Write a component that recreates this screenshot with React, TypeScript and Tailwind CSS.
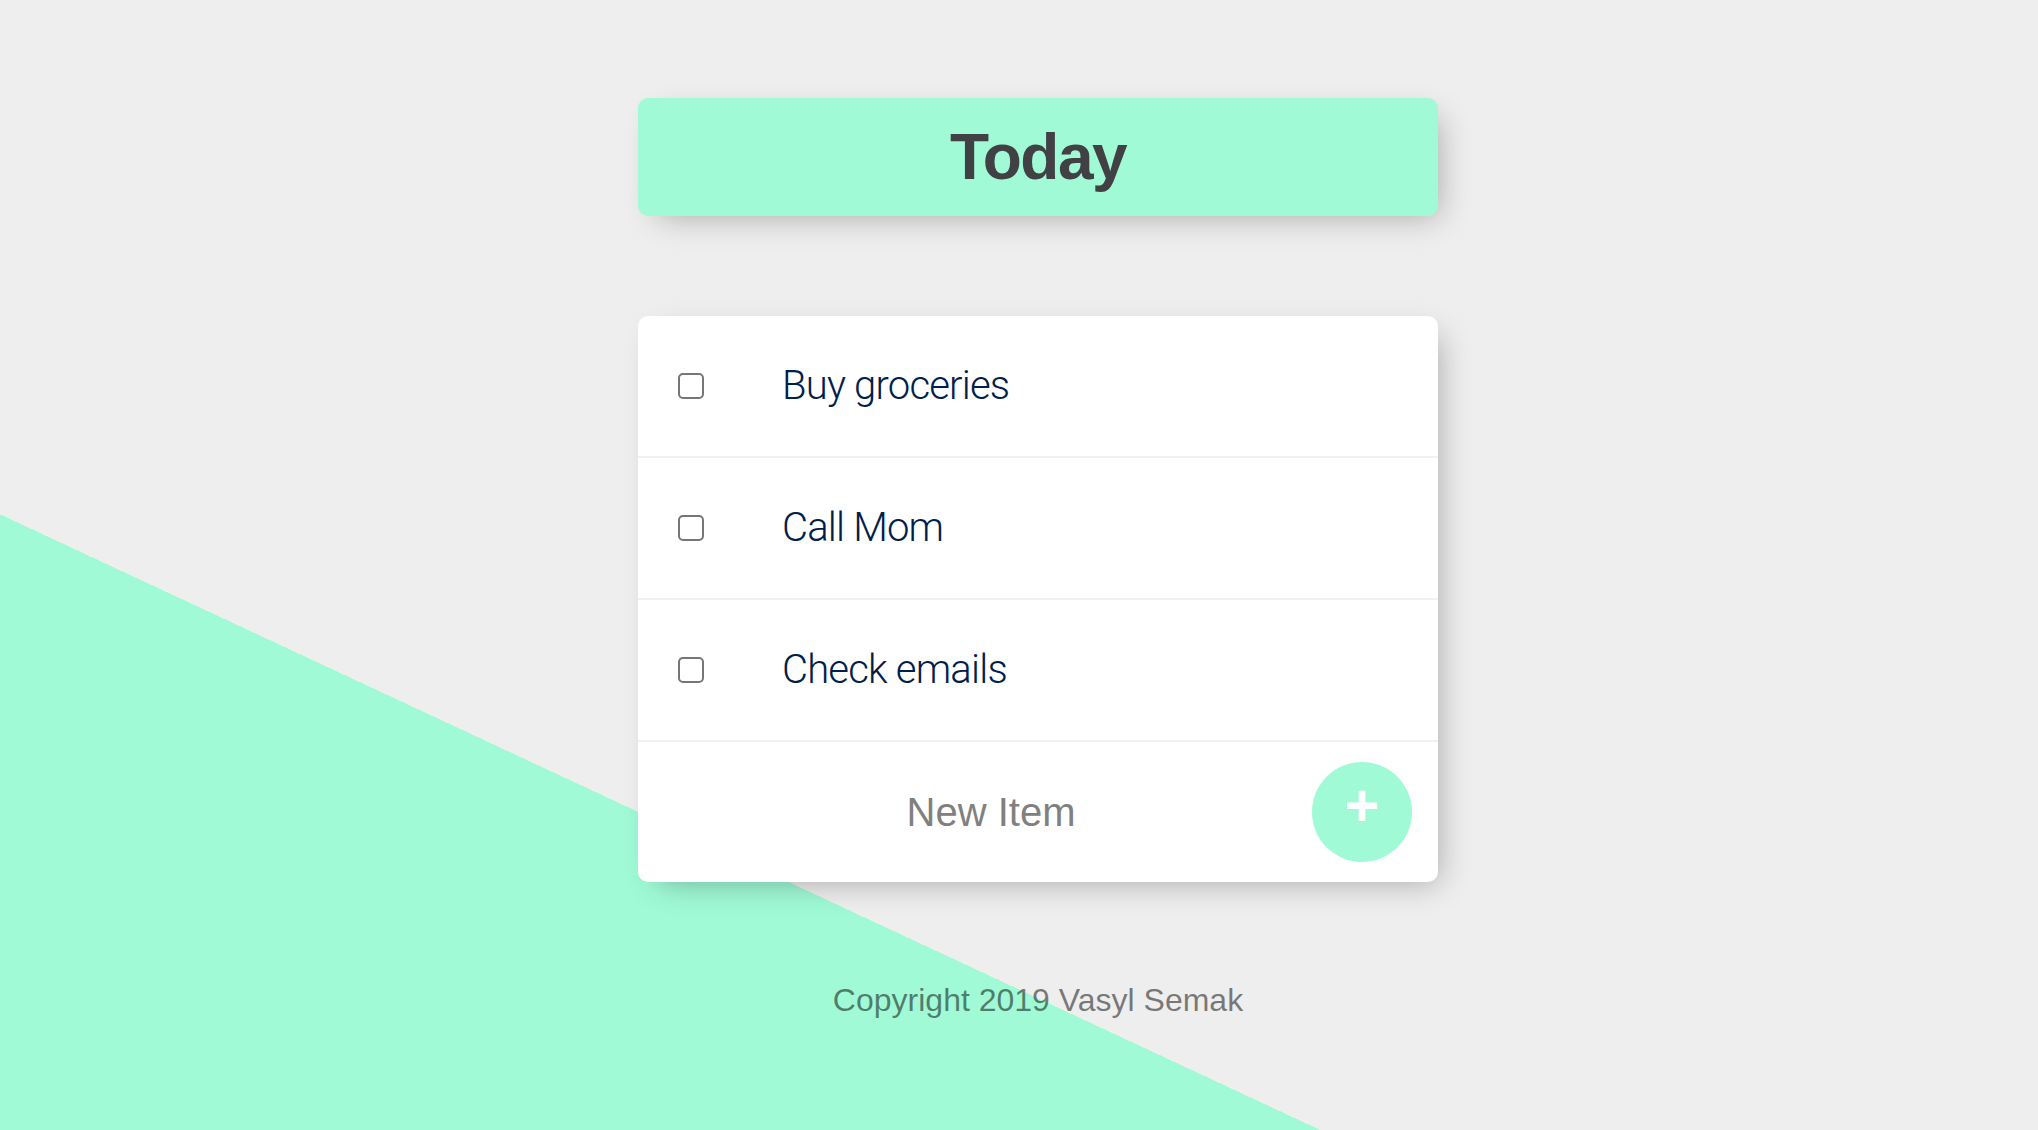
import { useState } from "react";

const initialItems = ["Buy groceries", "Call Mom", "Check emails"];

const App = () => {
  const [items] = useState(initialItems);
  const [checked, setChecked] = useState<boolean[]>(initialItems.map(() => false));
  const [newItem, setNewItem] = useState("");

  return (
    <div className="h-[1130px] overflow-hidden bg-[#eeeeee] bg-[linear-gradient(25deg,#a0fad6_50%,#eeeeee_50%)] bg-[length:100%_1979px] bg-no-repeat pt-[98px] pl-[38px] font-['Liberation_Sans',Arial,sans-serif]">
      <div className="mx-auto flex h-[118px] w-[800px] items-center justify-center rounded-[10px] bg-[#a0fad6] shadow-[10px_10px_30px_-10px_rgba(0,0,0,0.3)]">
        <h1 className="text-[64px] font-bold leading-none tracking-[-1.5px] text-[#414145]">Today</h1>
      </div>

      <div className="mx-auto mt-[100px] w-[800px] rounded-[10px] bg-white shadow-[10px_10px_30px_-10px_rgba(0,0,0,0.3)]">
        {items.map((item, i) => (
          <div key={item} className="flex min-h-[142px] items-center border-b-2 border-[#f1f1f1]">
            <input
              type="checkbox"
              checked={checked[i]}
              onChange={() => setChecked(checked.map((c, j) => (j === i ? !c : c)))}
              className="mx-[40px] h-[26px] w-[26px] shrink-0 appearance-none rounded-[5px] border-2 border-[#767676] bg-white checked:bg-[#a0fad6]"
            />
            <p className={`p-[40px] pl-[38px] font-['Roboto',sans-serif] text-[40px] font-light leading-[46px] tracking-[-0.8px] text-[#00204a] ${checked[i] ? "line-through decoration-[#a0fad6]" : ""}`}>
              {item}
            </p>
          </div>
        ))}

        <form className="ml-[40px] flex h-[140px] items-center" onSubmit={(e) => e.preventDefault()}>
          <input
            type="text"
            value={newItem}
            onChange={(e) => setNewItem(e.target.value)}
            placeholder="New Item"
            autoComplete="off"
            className="h-[120px] w-[626px] text-center text-[40px] text-[#00204a] outline-none placeholder:text-[#808080] focus:shadow-[inset_0_-6px_0_0_#a0fad6]"
          />
          <button
            type="submit"
            className="ml-[8px] h-[100px] w-[100px] rounded-full bg-[#a0fad6] pb-[12px] text-[60px] font-bold leading-none text-white"
          >
            +
          </button>
        </form>
      </div>

      <footer className="mt-[100px] text-center text-[32px] leading-[36px] text-black/50">Copyright 2019 Vasyl Semak</footer>
    </div>
  );
};

export default App;
